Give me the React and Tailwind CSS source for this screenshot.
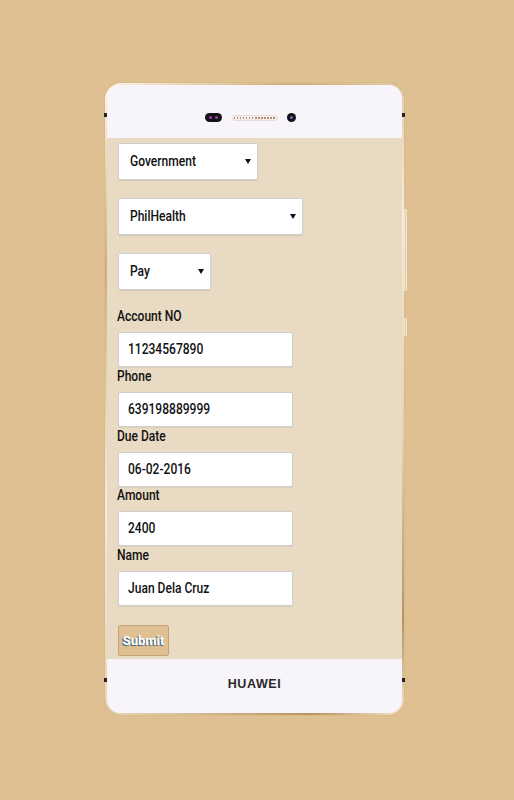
import React from "react";

function Arrow() {
  return (
    <svg width="6" height="5" viewBox="0 0 6 5" className="shrink-0">
      <path d="M0 0 L6 0 L3 5 Z" fill="#111" />
    </svg>
  );
}

function T({ children }) {
  return (
    <span className="inline-block origin-left scale-x-[0.86] text-[14px] font-medium text-[#111] whitespace-nowrap">
      {children}
    </span>
  );
}

function Select({ label, w }) {
  return (
    <div
      className={`${w} h-[37px] bg-white border border-[#cfcfcf] rounded-[2px] shadow-[0_1px_1px_rgba(0,0,0,0.08)] flex items-center justify-between pl-[11px] pr-[6px]`}
    >
      <T>{label}</T>
      <Arrow />
    </div>
  );
}

function Field({ label, value }) {
  return (
    <div className="flex flex-col">
      <div className="h-[18px] leading-[18px] -ml-[1px] flex items-center">
        <T>{label}</T>
      </div>
      <div className="mt-[7px] w-[175px] h-[35px] bg-white border border-[#cfcfcf] rounded-[2px] flex items-center pl-[9px] shadow-[0_1px_1px_rgba(0,0,0,0.06)]">
        <T>{value}</T>
      </div>
    </div>
  );
}

export default function App() {
  return (
    <div
      className="w-[514px] h-[800px] bg-[#dfc093] pt-[83px] pl-[105px]"
      style={{ fontFamily: "Roboto, 'Liberation Sans', sans-serif" }}
    >
      <div className="relative w-[299px] h-[632px] rounded-[16px] p-[2px] bg-[linear-gradient(135deg,#fdf6e8_0%,#cfae78_20%,#f6ecd8_45%,#e5d2ae_70%,#b89360_90%,#f5e7cc_100%)] shadow-[0_0_1px_rgba(120,90,40,0.5)]">
        {/* side buttons */}
        <div className="absolute right-[-3px] top-[126px] w-[3px] h-[82px] border border-[#efe4cf] rounded-[1px] bg-[#e6cfa6]" />
        <div className="absolute right-[-3px] top-[235px] w-[3px] h-[18px] border border-[#efe4cf] rounded-[1px] bg-[#e6cfa6]" />
        {/* small black marks */}
        <div className="absolute left-[-1px] top-[30px] w-[3px] h-[4px] bg-[#222]" />
        <div className="absolute right-[-1px] top-[30px] w-[3px] h-[4px] bg-[#222]" />
        <div className="absolute left-[-1px] top-[595px] w-[3px] h-[4px] bg-[#222]" />
        <div className="absolute right-[-1px] top-[595px] w-[3px] h-[4px] bg-[#222]" />

        <div className="w-full h-full rounded-[14px] overflow-hidden flex flex-col bg-[#f7f5f9]">
          {/* top bar */}
          <div className="h-[53px] shrink-0 bg-[#f7f5f9] flex items-center justify-center pt-[12px] pr-[8px]">
            <div className="w-[17px] h-[9px] rounded-full bg-[#151218] flex items-center justify-center gap-[3px]">
              <div className="w-[3px] h-[3px] rounded-full bg-[#9a3fa0]" />
              <div className="w-[3px] h-[3px] rounded-full bg-[#9a3fa0]" />
            </div>
            <div className="ml-[10px] w-[46px] h-[6px] rounded-full bg-[#f3ecea] border border-[#e6dcd8] flex items-center justify-center">
              <div className="w-[42px] h-[2px] bg-[repeating-linear-gradient(90deg,#b88f78_0px,#b88f78_1.5px,transparent_1.5px,transparent_3px)]" />
            </div>
            <div className="ml-[9px] w-[9px] h-[9px] rounded-full bg-[#15121a] flex items-center justify-center">
              <div className="w-[3px] h-[3px] rounded-full bg-[#6a6ad8]" />
            </div>
          </div>

          {/* screen */}
          <div className="h-[521px] shrink-0 bg-[#e8dac3] pl-[11px] pt-[5px] flex flex-col">
            <Select label="Government" w="w-[140px]" />
            <div className="h-[18px]" />
            <Select label="PhilHealth" w="w-[185px]" />
            <div className="h-[18px]" />
            <Select label="Pay" w="w-[93px]" />
            <div className="h-[17px]" />
            <Field label="Account NO" value="11234567890" />
            <Field label="Phone" value="639198889999" />
            <Field label="Due Date" value="06-02-2016" />
            <div className="mt-[-1px]">
              <Field label="Amount" value="2400" />
            </div>
            <Field label="Name" value="Juan Dela Cruz" />
            <div className="mt-[19px]">
              <div className="w-[51px] h-[31px] bg-[#dfc093] border border-[#c4a474] rounded-[2px] flex items-center justify-center">
                <span
                  className="text-[13px] font-bold text-white"
                  style={{ textShadow: "-1px 1px 1px #3a5a7a" }}
                >
                  Submit
                </span>
              </div>
            </div>
          </div>

          {/* bottom bar */}
          <div className="flex-1 bg-[#f7f5f9] flex items-center justify-center pb-[4px]">
            <span
              className="text-[12.5px] font-bold text-[#2b272c] tracking-[0.6px]"
              style={{ fontFamily: "'Liberation Sans', Arial, sans-serif" }}
            >
              HUAWEI
            </span>
          </div>
        </div>
      </div>
    </div>
  );
}
